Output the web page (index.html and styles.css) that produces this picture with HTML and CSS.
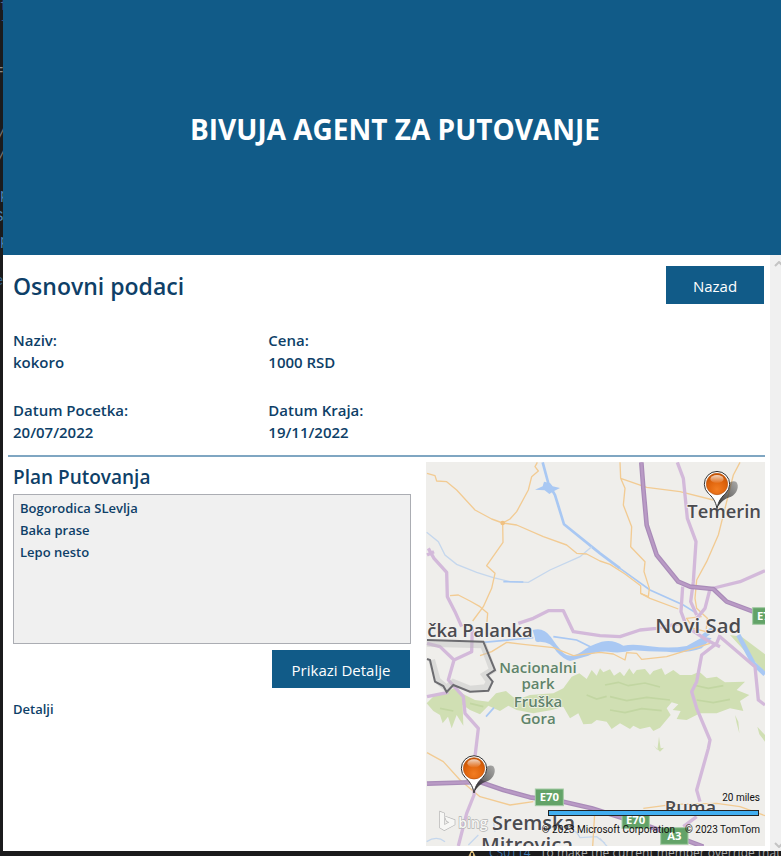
FILE: index.html
```html
<!DOCTYPE html>
<html lang="sr-Latn">
<head>
<meta charset="utf-8">
<meta name="viewport" content="width=device-width, initial-scale=1">
<title>Bivuja agent za putovanje</title>
<link rel="stylesheet" href="styles.css">
</head>
<body>
<div class="desktop">
  <svg class="editor-edge" width="3" height="300" viewBox="0 0 3 300" aria-hidden="true">
    <g class="edge-text">
      <text x="0" y="10" fill="#42658f">f</text>
      <text x="0" y="31" fill="#344f86">l</text>
      <text x="-5" y="75" fill="#8a8a8a">=</text>
      <text x="-3" y="139" fill="#777">/</text>
      <text x="-3" y="161" fill="#777">/</text>
      <text x="0" y="199" fill="#4a86bd">p</text>
      <text x="-5" y="221" fill="#4a86bd">S</text>
      <text x="0" y="245" fill="#4a86bd">p</text>
      <text x="-5" y="285" fill="#35648c">e</text>
    </g>
  </svg>
  <div class="window">
    <header class="banner"><h1>BIVUJA AGENT ZA PUTOVANJE</h1></header>
    <div class="viewport">
      <main class="page">
        <section class="basics">
          <div class="basics-head">
            <h2>Osnovni podaci</h2>
            <button class="btn btn-back" type="button">Nazad</button>
          </div>
          <dl class="facts">
            <div><dt>Naziv:</dt><dd>kokoro</dd></div>
            <div><dt>Cena:</dt><dd>1000 RSD</dd></div>
            <div><dt>Datum Pocetka:</dt><dd>20/07/2022</dd></div>
            <div><dt>Datum Kraja:</dt><dd>19/11/2022</dd></div>
          </dl>
        </section>
        <section class="trip">
          <div class="plan">
            <h3>Plan Putovanja</h3>
            <ul class="stops">
              <li>Bogorodica SLevlja</li>
              <li>Baka prase</li>
              <li>Lepo nesto</li>
            </ul>
            <button class="btn btn-details" type="button">Prikazi Detalje</button>
            <h4>Detalji</h4>
          </div>
          <div class="map">
            <svg class="map-art" viewBox="18 21 1017 1152" preserveAspectRatio="xMidYMid slice" role="img" aria-label="Mapa">
              <defs>
                <radialGradient id="ball" cx=".5" cy=".75" r=".7">
                  <stop offset="0" stop-color="#f27d22"/><stop offset=".6" stop-color="#e0640c"/><stop offset="1" stop-color="#c95503"/>
                </radialGradient>
                <linearGradient id="gloss" x1="0" y1="0" x2="0" y2="1">
                  <stop offset="0" stop-color="#fff" stop-opacity=".75"/><stop offset="1" stop-color="#fff" stop-opacity=".05"/>
                </linearGradient>
                <linearGradient id="shade" x1="0" y1="1" x2="1" y2="0">
                  <stop offset="0" stop-color="#111" stop-opacity=".9"/><stop offset="1" stop-color="#555" stop-opacity=".45"/>
                </linearGradient>
                <g id="pin">
                  <path fill="url(#shade)" d="M0 72 L12 30 C20 5 45 -16 58 -6 C68 6 60 30 42 38 C25 43 12 52 0 72Z"/>
                  <path fill="#fff" stroke="#333" stroke-width="3" d="M0 74 C-4 50 -15 38 -26 28 A38 38 0 1 1 26 28 C15 38 4 50 0 74Z"/>
                  <circle r="32" fill="url(#ball)" stroke="#b85410" stroke-width="2"/>
                  <ellipse cy="-15" rx="20" ry="12" fill="url(#gloss)"/>
                </g>
              </defs>
              <rect x="18" y="21" width="1017" height="1152" fill="#efeeeb"/>

              <g class="parks">
                <path d="M20 745 L50 715 L80 712 L100 700 L135 720 L165 735 L205 740 L228 715 L258 708 L290 735 L330 720 L400 715 L430 700 L455 665 L478 655 L500 672 L515 645 L530 662 L540 640 L550 652 L570 643 L582 662 L600 650 L612 664 L628 640 L640 658 L650 645 L675 642 L690 660 L700 648 L725 640 L735 660 L760 645 L780 660 L815 660 L838 650 L860 670 L890 665 L915 682 L975 680 L950 705 L988 720 L960 738 L970 768 L930 760 L890 775 L840 775 L800 795 L770 792 L782 768 L758 765 L775 748 L755 742 L740 760 L752 780 L720 818 L700 828 L690 815 L660 822 L640 812 L630 822 L600 805 L575 822 L560 800 L530 795 L515 806 L490 808 L475 775 L450 790 L430 755 L395 765 L340 775 L290 765 L265 752 L240 768 L205 752 L180 778 L150 765 L128 750 L130 812 L110 780 L95 820 L84 785 L68 805 L60 780 L40 768Z"/>
                <path d="M700 870 L712 885 L717 845 L722 880 L732 878 L720 890Z M945 780 L955 800 L958 835 L950 805Z M1012 815 L1035 840 L1035 860 L1018 838Z M930 540 L965 545 L1035 598 L1035 650 L985 600Z"/>
              </g>
              <g class="park-grain">
                <path d="M555 690 l40 -8 30 10 50 -8 45 12 M570 725 l50 12 60 -10 70 8 M570 765 l45 8 50 -12 60 6 M820 690 l45 10 45 -8 M830 735 l50 8 50 -10 M500 720 l30 12 30 -8 M150 745 l40 10 M60 760 l40 8"/>
              </g>

              <g class="water">
                <path d="M338 525 Q370 515 392 545 Q410 572 430 594 Q450 612 485 590 Q510 570 545 560 Q580 552 610 572 Q640 565 690 574 Q750 582 800 573 L850 545 L875 550 L845 580 Q800 596 740 590 Q680 590 640 586 Q600 596 565 590 Q530 588 505 602 L450 618 Q430 612 410 590 Q395 560 360 560 Q345 565 345 550Z"/>
                <path d="M345 104 L368 94 L372 80 L390 84 L398 94 L420 99 L402 108 L388 117 L374 106Z"/>
                <path class="line thick" d="M368 22 L385 85 L405 120 L432 208 L540 295 L600 340"/>
                <path class="line" d="M600 340 L690 405 L790 450 L830 475"/>
                <path class="line thin" d="M20 232 L55 260 L75 300 L110 328 L170 352 L220 368 L270 380 L325 382 L390 345 L480 305 L515 275"/>
                <path class="line" d="M250 380 L310 381 M198 785 L222 758 M190 562 L340 548 M400 545 L470 555 L520 580"/>
                <path class="line wide" d="M850 545 L880 520 M955 540 L1000 625 L1035 658"/>
                <path class="line thin" d="M20 1160 Q50 1140 75 1160 M145 1170 L175 1140 M220 1095 L225 1130 M440 1115 L470 1132 L480 1148 L530 1145 L555 1165 M540 1150 L562 1175"/>
              </g>

              <g class="minor">
                <path d="M21 55 L45 62 L50 78 L80 80 L110 105 L165 165 L215 192 L248 204 L290 210 L370 245 L440 270 L470 295 L500 297 L540 318 L570 328 L615 357 L662 392 L662 415 L690 430 L775 462"/>
                <path d="M352 22 L345 35 L355 48 L335 65 L325 105 L290 170 L270 192 L248 204 L249 262 L200 332 L225 355 L215 400 L190 455 L158 498"/>
                <path d="M90 422 L115 420 L150 438 L180 455 L203 475 L200 510"/>
                <path d="M600 22 L602 70 L680 97 L780 110 L880 135 M602 70 L615 100 L610 150 L635 215 L632 275 L675 320 L672 350 L688 400 L685 425 L662 415"/>
                <path d="M960 22 L940 60 L915 160 L895 240 L860 320 L830 375 L825 430 L830 460 L862 490 L858 530 L820 520 L800 490 L845 485"/>
                <path d="M180 602 L215 590 L260 562 L310 568 L400 578 L460 602 L540 592 L580 597 L615 615 L620 593 L650 595 L665 613 L740 605 L870 565"/>
                <path d="M21 893 L70 920 L120 975 L180 1025 L270 1050 L340 1040 M670 1060 L760 1048 L890 1045 L960 1055 L1035 1082 M525 1060 L518 1175"/>
              </g>
              <circle cx="248" cy="204" r="7" fill="#f0c182"/>

              <g class="road">
                <path d="M25 280 L42 310 L80 352 L82 425 L105 470 L125 515 M21 300 L42 290"/>
                <path d="M295 505 L340 490 L385 467 L430 467 L460 530 L540 542 L600 545 L660 525 L710 520 L780 505"/>
                <path d="M772 22 L790 70 L802 190 L828 260 L820 380 L812 440 L830 480"/>
                <path d="M1035 347 L960 380 L870 402 L855 460 L830 490 M788 395 L783 470 L800 515 L860 555 L900 575"/>
                <path d="M900 540 L890 565 L845 600 L830 680 L815 710 L830 760 L870 855 L865 880 L830 1005 L840 1040 M830 1085 L790 1115 M900 545 L1005 635 L1015 735 L1035 750"/>
                <path d="M157 515 L155 590 L102 615 L85 675 L130 725 L135 775 L175 820 L165 905 L162 1020 L140 1075 L115 1173 M21 565 L60 575 L102 615 M21 725 L85 712"/>
              </g>
              <g class="highway">
                <path d="M664 22 L670 100 L680 210 L710 300 L775 380 L810 395 L880 402 L920 440 L1000 470"/>
                <path d="M21 986 L180 981 L250 1005 L330 1027 L430 1040 L515 1060 L690 1115 L850 1175"/>
              </g>
              <g class="highway-core">
                <path d="M664 22 L670 100 L680 210 L710 300 L775 380 L810 395 L880 402 L920 440 L1000 470"/>
                <path d="M21 986 L180 981 L250 1005 L330 1027 L430 1040 L515 1060 L690 1115 L850 1175"/>
              </g>

              <path class="border-glow" d="M21 565 L190 570 L218 645 L194 660 L208 680 L198 698 L150 702 L100 682 L80 700 L52 676 L35 615"/>
              <path class="border" d="M21 555 L190 560 L225 645 L202 660 L218 680 L205 707 L150 710 L100 690 L80 711 L70 693 L45 680 L30 615 L21 612"/>

              <g class="towns">
                <text x="22" y="546" font-size="55">čka Palanka</text>
                <text x="802" y="190" font-size="55">Temerin</text>
                <text x="706" y="534" font-size="61">Novi Sad</text>
                <text x="216" y="1125" font-size="60">Sremska</text>
                <text x="183" y="1190" font-size="61">Mitrovica</text>
                <text x="734" y="1076" font-size="55">Ruma</text>
              </g>
              <g class="park-name">
                <text x="354" y="653">Nacionalni</text>
                <text x="354" y="703">park</text>
                <text x="354" y="756">Fruška</text>
                <text x="354" y="807">Gora</text>
              </g>
              <g class="shields">
                <rect x="346" y="1002" width="84" height="50"/><text x="388" y="1039">E70</text>
                <rect x="606" y="1070" width="82" height="50"/><text x="647" y="1107">E70</text>
                <rect x="722" y="1118" width="82" height="50"/><text x="763" y="1155">A3</text>
                <rect x="998" y="458" width="84" height="50"/><text x="1040" y="495">E70</text>
              </g>
              <g class="bing">
                <path d="M60 1070 L73 1075 V1110 L88 1102 L80 1098 L74 1084 L104 1095 V1109 L73 1126 L60 1118Z"/>
                <text x="115" y="1118">bing</text>
              </g>
              <use href="#pin" x="891" y="87"/>
              <use href="#pin" x="162" y="940"/>
            </svg>
            <div class="map-legend">
              <span class="scale-label">20 miles</span>
              <span class="scale-bar"></span>
              <span class="credits"><span>© 2023 Microsoft Corporation</span><span>© 2023 TomTom</span></span>
            </div>
          </div>
        </section>
      </main>
      <div class="scroll-rail" aria-hidden="true">
        <svg width="7" height="6" viewBox="0 0 7 6"><path d="M1 5 L5 1 L9 5"/></svg>
        <svg width="7" height="6" viewBox="0 0 7 6"><path d="M1 1 L5 5 L9 1"/></svg>
      </div>
    </div>
  </div>
  <footer class="error-list">
    <svg width="10" height="10" viewBox="0 0 10 10" aria-hidden="true"><path fill="#d9b978" d="M4 0 H6 L10 8 H0Z"/><path fill="#222" d="M4 2h2v6H4z"/></svg>
    <span class="code">CS0114</span>
    <span>To make the current member override that implementation</span>
  </footer>
</div>
</body>
</html>
```
FILE: styles.css
```css
* { box-sizing: border-box; }

body {
  margin: 0;
  background: #1b1b1c;
  color: #0e3f68;
  font-family: "Open Sans", "Noto Sans", sans-serif;
  font-weight: 600;
}

h1, h2, h3, h4, dl, dd, ul { margin: 0; padding: 0; }

.desktop {
  display: grid;
  grid-template-columns: 3px minmax(0, 1fr);
  grid-template-rows: 1fr 5px;
  min-height: 100vh;
  overflow: hidden;
}

.edge-text { font: 14px "Liberation Mono", monospace; }

.window {
  display: flex;
  flex-direction: column;
  background: #fff;
}

.banner {
  display: flex;
  align-items: center;
  justify-content: center;
  height: 255px;
  padding: 2px 0 0 6px;
  background: #115b88;
  color: #fff;
}
.banner h1 { font-size: 28px; line-height: 36px; font-weight: 700; }

.viewport { display: flex; flex: 1; }
.page { flex: 1; min-width: 0; display: flex; flex-direction: column; padding: 11px 5px 5px; }

.basics { padding: 0 1px 12px 5px; border-bottom: 2px solid #7fa6c2; }
.basics-head { display: flex; justify-content: space-between; align-items: flex-start; height: 63px; }
h2 { font-size: 23px; line-height: 40px; font-weight: 600; }
.facts {
  display: grid;
  grid-template-columns: 34fr 66fr;
  row-gap: 26px;
  font-size: 15px;
  line-height: 22px;
}

.btn {
  height: 38px;
  padding: 2px 0 0;
  border: 0;
  background: #115b88;
  color: #fff;
  font: 400 15px "Open Sans", "Noto Sans", sans-serif;
}
.btn-back { width: 98px; }
.btn-details { width: 138px; align-self: flex-end; margin: 6px 1px 0 0; }

.trip {
  flex: 1;
  display: grid;
  grid-template-columns: 398fr 339fr;
  column-gap: 15px;
  padding: 5px 0 0 5px;
}
.plan { display: flex; flex-direction: column; }
h3 { margin-bottom: 2px; font-size: 19px; line-height: 30px; font-weight: 600; }
h4 { margin-top: 10px; font-size: 13px; line-height: 22px; font-weight: 600; }
.stops {
  height: 150px;
  padding: 2px 6px;
  border: 1px solid #abadb3;
  background: #f0f0f0;
  list-style: none;
  font-size: 13px;
  line-height: 22px;
}

.map { position: relative; min-height: 384px; overflow: hidden; background: #efeeeb; }
.map-art { position: absolute; inset: 0; width: 100%; height: 100%; }

.parks { fill: #d0dfb3; }
.park-grain { fill: none; stroke: #c2d6a2; stroke-width: 5; }
.water { fill: #a9c8f3; }
.water .line { fill: none; stroke: #a9c8f3; stroke-width: 5; }
.water .thick { stroke-width: 8; }
.water .wide { stroke-width: 14; }
.water .thin { stroke: #c5d7ed; stroke-width: 4; }
.minor { fill: none; stroke: #f2cb93; stroke-width: 4; stroke-linejoin: round; }
.road { fill: none; stroke: #d3b9da; stroke-width: 10; stroke-linejoin: round; }
.highway { fill: none; stroke: #a98bb8; stroke-width: 14; stroke-linejoin: round; }
.highway-core { fill: none; stroke: #b99ac5; stroke-width: 7; }
.border-glow { fill: none; stroke: #bbb; stroke-opacity: .4; stroke-width: 20; }
.border { fill: none; stroke: #6c6c70; stroke-width: 6; }
.towns { fill: #4b4b4f; stroke: #f4f2f0; stroke-width: 5; paint-order: stroke; }
.park-name {
  fill: #60836b;
  stroke: #f0f2ea;
  stroke-width: 5;
  paint-order: stroke;
  font-size: 45px;
  text-anchor: middle;
}
.shields rect { fill: #63a368; stroke: #a5cba6; stroke-width: 3; }
.shields text { fill: #fff; font-size: 34px; font-weight: 700; text-anchor: middle; }
.bing { fill: #f7f7f5; stroke: #b3b3b3; stroke-width: 4; paint-order: stroke; }
.bing text { font-size: 42px; }

.map-legend {
  position: absolute;
  right: 5px;
  bottom: 9px;
  display: flex;
  flex-direction: column;
  align-items: flex-end;
  color: #111;
  font-family: Roboto, sans-serif;
  font-size: 10px;
  line-height: 14px;
  font-weight: 400;
}
.scale-label { margin-bottom: 5px; }
.scale-bar { width: 211px; height: 6px; margin: 0 1px 7px 0; border: 1px solid #222; background: #41aef0; }
.credits { display: flex; gap: 10px; white-space: nowrap; }

.scroll-rail {
  display: flex;
  flex-direction: column;
  justify-content: space-between;
  align-items: flex-end;
  width: 11px;
  padding: 6px 0 3px;
  background: #f0f0f0;
}
.scroll-rail svg { fill: none; stroke: #c4c4c4; stroke-width: 2; }

.error-list {
  grid-column: 1 / -1;
  display: flex;
  align-items: flex-start;
  height: 5px;
  overflow: hidden;
  padding-left: 467px;
  color: #aaa;
  font-size: 12px;
  line-height: 4px;
  font-weight: 400;
  white-space: nowrap;
}
.error-list .code { width: 51px; margin-left: 12px; color: #3f78b0; }
.error-list span, .error-list svg { flex: none; }
```
